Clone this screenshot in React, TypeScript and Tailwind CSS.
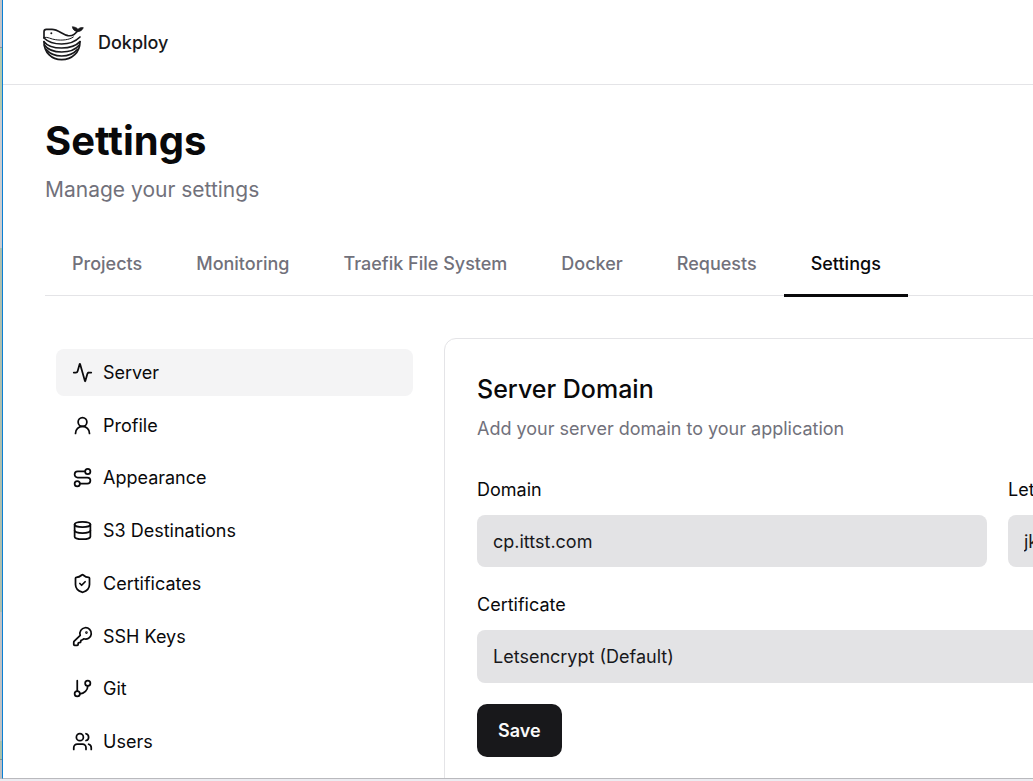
import { useState } from 'react'
import { Activity, Database, GitBranch, KeyRound, Route, ShieldCheck, UserRound, Users } from 'lucide-react'

const TABS = ['Projects', 'Monitoring', 'Traefik File System', 'Docker', 'Requests', 'Settings']

const NAV = [
  { label: 'Server', icon: Activity },
  { label: 'Profile', icon: UserRound },
  { label: 'Appearance', icon: Route },
  { label: 'S3 Destinations', icon: Database },
  { label: 'Certificates', icon: ShieldCheck },
  { label: 'SSH Keys', icon: KeyRound },
  { label: 'Git', icon: GitBranch },
  { label: 'Users', icon: Users },
]

function Logo() {
  return (
    <svg viewBox="36 30 126 108" className="h-9 w-[42px] shrink-0" fill="none" stroke="#18181b" strokeWidth="5" strokeLinecap="round" strokeLinejoin="round" aria-hidden="true">
      <path d="M42 69V50Q42 43 49 43H66C84 43 98 59 114 62C127 64 136 58 143 47" />
      <path d="M42 67C54 65 64 73 76 74C96 77 118 75 130 66" strokeWidth="3" />
      <path d="M42 69C54 81 74 87 95 87C118 87 136 80 150 66" />
      <path d="M42 80C52 93 72 99 95 99C118 99 138 93 150 80" />
      <path d="M43 90C54 105 74 111 95 111C116 111 136 105 148 90" />
      <path d="M48 103C60 117 76 123 95 123C114 123 130 117 143 103" />
      <path d="M42 80C42 112 64 134 95 134C126 134 150 112 150 80" />
      <path d="M143 50C136 49 128 45 127 35C134 36 141 38 144 43C148 38 154 37 160 38C157 46 150 50 143 50Z" fill="#18181b" strokeWidth="2" />
      <circle cx="64" cy="55" r="3" fill="#18181b" stroke="none" />
    </svg>
  )
}

export default function App() {
  const [tab, setTab] = useState('Settings')
  const [section, setSection] = useState('Server')

  return (
    <div className="flex h-screen flex-col overflow-hidden bg-[#ececf1] font-['Inter',sans-serif] text-lg text-zinc-950">
      <div className="flex min-h-0 flex-1">
        <div className="flex w-[2px] shrink-0 flex-col">
          <div className="h-12 border-b border-[#8f9297] bg-[#c3c4c8]" />
          <div className="h-[62px] bg-[#b2c8ae]" />
          <div className="h-[138px] bg-[#cbcdd0]" />
          <div className="h-[364px] bg-[#aebfae]" />
          <div className="flex-1 bg-[#c0c2c4]" />
          <div className="h-[19px] border-b border-[#84908a] bg-[#a9c0ab]" />
          <div className="h-[19px] bg-[#bcbec2]" />
        </div>
        <div className="min-w-0 flex-1 overflow-hidden border-b border-l border-b-[#b9b9bd] border-l-[#0a7fd4] bg-white">
          <div className="min-w-[1590px]">
            <header className="flex h-[85px] items-center border-b border-zinc-200 px-[39px] pt-[2px]">
              <a href="#" className="flex items-center gap-[14px] font-medium text-zinc-900">
                <Logo />
                Dokploy
              </a>
            </header>

            <main className="px-[42px] pt-8">
              <h1 className="text-[40px] leading-[48px] font-bold">Settings</h1>
              <p className="mt-[9px] text-[21px] leading-8 text-zinc-500">Manage your settings</p>

              <div role="tablist" className="mt-[27px] flex h-[63px] border-b border-zinc-200">
                {TABS.map((t) => (
                  <button
                    key={t}
                    role="tab"
                    aria-selected={t === tab}
                    onClick={() => setTab(t)}
                    className={`-mb-[2px] border-b-3 px-[27px] font-medium ${t === tab ? 'border-zinc-950' : 'border-transparent text-zinc-500'}`}
                  >
                    {t}
                  </button>
                ))}
              </div>

              <div className="mt-[42px] flex gap-[31px]">
                <nav className="flex w-[368px] shrink-0 flex-col justify-between pt-[11px] pb-[25px] pl-[11px]">
                  {NAV.map(({ label, icon: Icon }) => (
                    <a
                      key={label}
                      href="#"
                      onClick={() => setSection(label)}
                      className={`flex h-[47px] items-center gap-[10px] rounded-lg px-4 leading-[29px] ${label === section ? 'bg-zinc-100' : ''}`}
                    >
                      <Icon size={21} />
                      {label}
                    </a>
                  ))}
                </nav>

                <section className="flex-1 rounded-xl border border-zinc-200 px-8 pt-8 pb-8">
                  <h2 className="text-[25px] leading-9 font-medium">Server Domain</h2>
                  <p className="mt-[9px] leading-[26px] text-zinc-500">Add your server domain to your application</p>

                  <form className="mt-[38px]" onSubmit={(e) => e.preventDefault()}>
                    <div className="grid grid-cols-2 gap-[21px]">
                      <div className="flex flex-col gap-[15px]">
                        <label htmlFor="domain" className="leading-5">Domain</label>
                        <input id="domain" defaultValue="cp.ittst.com" className="h-[52px] rounded-lg bg-[#e3e3e5] px-4 text-zinc-900" />
                      </div>
                      <div className="flex flex-col gap-[15px]">
                        <label htmlFor="email" className="leading-5">Letsencrypt Email</label>
                        <input id="email" defaultValue="jk" className="h-[52px] rounded-lg bg-[#e3e3e5] px-4 text-zinc-900" />
                      </div>
                    </div>
                    <div className="mt-7 flex flex-col gap-[15px]">
                      <label htmlFor="certificate" className="leading-5">Certificate</label>
                      <select id="certificate" className="h-[53px] appearance-none rounded-lg bg-[#e3e3e5] px-4 text-zinc-900">
                        <option>Letsencrypt (Default)</option>
                      </select>
                    </div>
                    <button type="submit" className="mt-[21px] h-[53px] rounded-[10px] bg-zinc-900 px-[21px] font-semibold text-zinc-50">Save</button>
                  </form>
                </section>
              </div>
            </main>
          </div>
        </div>
      </div>
      <div className="h-[2px] shrink-0" />
    </div>
  )
}
